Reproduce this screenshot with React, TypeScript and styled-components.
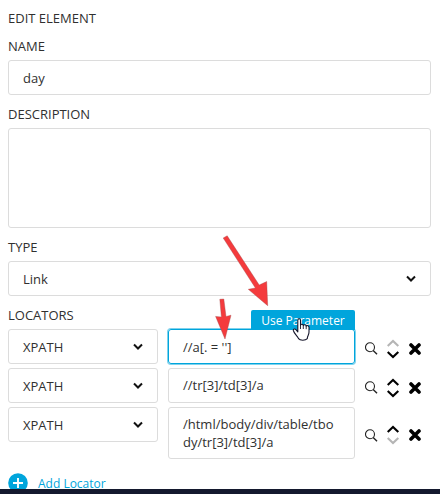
import React from "react";
import styled, { createGlobalStyle } from "styled-components";

const Global = createGlobalStyle`
  * { box-sizing: border-box; }
  body {
    margin: 0;
    background: #fff;
    color: #303030;
    font-family: "Open Sans", sans-serif;
    font-size: 13px;
    overflow: hidden;
  }
`;

const Page = styled.main`
  position: relative;
  display: flex;
  flex-direction: column;
  width: 440px;
  height: 494px;
  overflow: hidden;
`;

const Form = styled.div`
  flex: 1;
  min-height: 0;
  display: flex;
  flex-direction: column;
  padding: 0 9px 0 8px;
`;

const Heading = styled.div`
  flex: none;
  height: 27px;
  padding-top: 9px;
  line-height: 18px;
`;

const Label = styled.label`
  flex: none;
  height: 33px;
  padding-top: 10px;
  line-height: 18px;
`;

const Field = styled.div<{ $height?: number }>`
  flex: none;
  display: flex;
  justify-content: space-between;
  align-items: center;
  height: ${(p) => p.$height ?? 35}px;
  padding: 1px 14px 0;
  border: 1px solid #dcdcdc;
  border-radius: 3px;
`;

const Rows = styled.div`
  flex: none;
  display: flex;
  flex-direction: column;
  gap: 4px;
`;

const Row = styled.div`
  display: grid;
  grid-template-columns: 150px 187px 1fr;
  column-gap: 10px;
  align-items: start;
`;

const Locator = styled.div<{ $active?: boolean }>`
  position: relative;
  min-height: 35px;
  padding: ${(p) => (p.$active ? "8px" : "7px")} 14px 7px;
  border: 1px solid ${(p) => (p.$active ? "#00a5dc" : "#dcdcdc")};
  box-shadow: ${(p) => (p.$active ? "0 0 0 1px rgba(0, 165, 220, 0.5)" : "none")};
  border-radius: 3px;
  line-height: 18px;
  word-break: break-all;
`;

const ParameterButton = styled.button`
  position: absolute;
  right: -1px;
  bottom: 33px;
  width: 104px;
  height: 20px;
  padding: 1px 0 0;
  border: 0;
  border-radius: 2px 2px 0 0;
  background: #00a5dc;
  color: #fff;
  font: 500 12px/19px "Open Sans", sans-serif;
`;

const Actions = styled.div`
  align-self: center;
  display: flex;
  align-items: center;
  gap: 9px;
  padding-top: 4px;
`;

const AddRow = styled.div`
  flex: none;
  display: flex;
  align-items: center;
  gap: 10px;
  height: 20px;
  margin-top: 14px;
  color: #00a5dc;
  font-size: 12px;
  line-height: 12px;
`;

const AddText = styled.span`
  padding-top: 2px;
`;

const BottomBar = styled.footer`
  position: relative;
  flex: none;
  height: 5px;
  background: #14192e;
`;

const Overlay = styled.svg`
  position: absolute;
  inset: 0;
  pointer-events: none;
`;

const Caret = () => (
  <svg width="10" height="8" viewBox="0 0 10 8" fill="none" stroke="#111" strokeWidth="2">
    <path d="M1 1.5 5 5.5 9 1.5" />
  </svg>
);

const SearchIcon = () => (
  <svg width="13" height="13" viewBox="0 0 13 13" fill="none" stroke="#222">
    <circle cx="5" cy="5.2" r="4.5" strokeWidth="1.1" />
    <path d="M8.2 8.4 12 12.2" strokeWidth="1.4" />
  </svg>
);

const MoveIcon = ({ up, down }: { up: boolean; down: boolean }) => (
  <svg width="13" height="20" viewBox="0 0 13 20" fill="none" strokeWidth="2.1">
    <path d="M0.7 7 6 1.9 11.3 7" stroke={up ? "#000" : "#b5b5b5"} />
    <path d="M0.7 13 6 18.1 11.3 13" stroke={down ? "#000" : "#b5b5b5"} />
  </svg>
);

const RemoveIcon = () => (
  <svg width="12" height="12" viewBox="0 0 12 12" stroke="#000" strokeWidth="3.6" strokeLinecap="round">
    <path d="M2 2 10 10M10 2 2 10" />
  </svg>
);

const PlusIcon = () => (
  <svg width="20" height="20" viewBox="0 0 20 20">
    <circle cx="10" cy="10" r="9.8" fill="#00a5dc" />
    <path d="M10 5V15M5 10H15" stroke="#fff" strokeWidth="1.9" />
  </svg>
);

const locators = ["//a[. = '']", "//tr[3]/td[3]/a", "/html/body/div/table/tbody/tr[3]/td[3]/a"];

export default function App() {
  return (
    <Page>
      <Global />
      <Form>
        <Heading>EDIT ELEMENT</Heading>
        <Label>NAME</Label>
        <Field>day</Field>
        <Label>DESCRIPTION</Label>
        <Field $height={100} />
        <Label>TYPE</Label>
        <Field>
          Link
          <Caret />
        </Field>
        <Label>LOCATORS</Label>
        <Rows>
          {locators.map((text, i) => (
            <Row key={text}>
              <Field>
                XPATH
                <Caret />
              </Field>
              <Locator $active={i === 0}>
                {text}
                {i === 0 && <ParameterButton>Use Parameter</ParameterButton>}
              </Locator>
              <Actions>
                <SearchIcon />
                <MoveIcon up={i > 0} down={i < locators.length - 1} />
                <RemoveIcon />
              </Actions>
            </Row>
          ))}
        </Rows>
        <AddRow>
          <PlusIcon />
          <AddText>Add Locator</AddText>
        </AddRow>
      </Form>
      <BottomBar />
      <Overlay width="440" height="494" viewBox="0 0 440 494">
        <g fill="#f43b3d" stroke="#a5484a" strokeWidth="0.4">
          <path d="M223.2 238 227.2 235.8 259.2 285 266.7 281.5 267.7 305.7 248.3 289.3 255.4 288Z" />
          <path d="M219.8 299.3 223.8 299 226 316.5 231 315.2 225 339 215.6 316.4 221.4 317Z" />
        </g>
        <path
          d="M297.4 319.2c0-1.9 2.7-1.9 2.7 0v5c.3-1.3 2.7-1.2 2.8.3.5-1.2 2.8-.9 2.9.6.7-1 2.8-.5 2.8 1.2v4.8c0 2.7-1.7 4-1.7 6.5-1.8 2.1-7.3 2.1-8.8 0-.8-2.5-4.7-5.3-5.2-8.2-.2-1.8 2-1.7 2.9-.5l1.6 2Z"
          transform="translate(0.4 1)"
          fill="#fff"
          stroke="#15152a"
          strokeWidth="1.1"
          strokeLinejoin="round"
        />
        <path d="M300.5 325v4M303.3 325.5v3.5M306.2 326.2v3" stroke="#15152a" strokeWidth="0.9" />
      </Overlay>
    </Page>
  );
}
